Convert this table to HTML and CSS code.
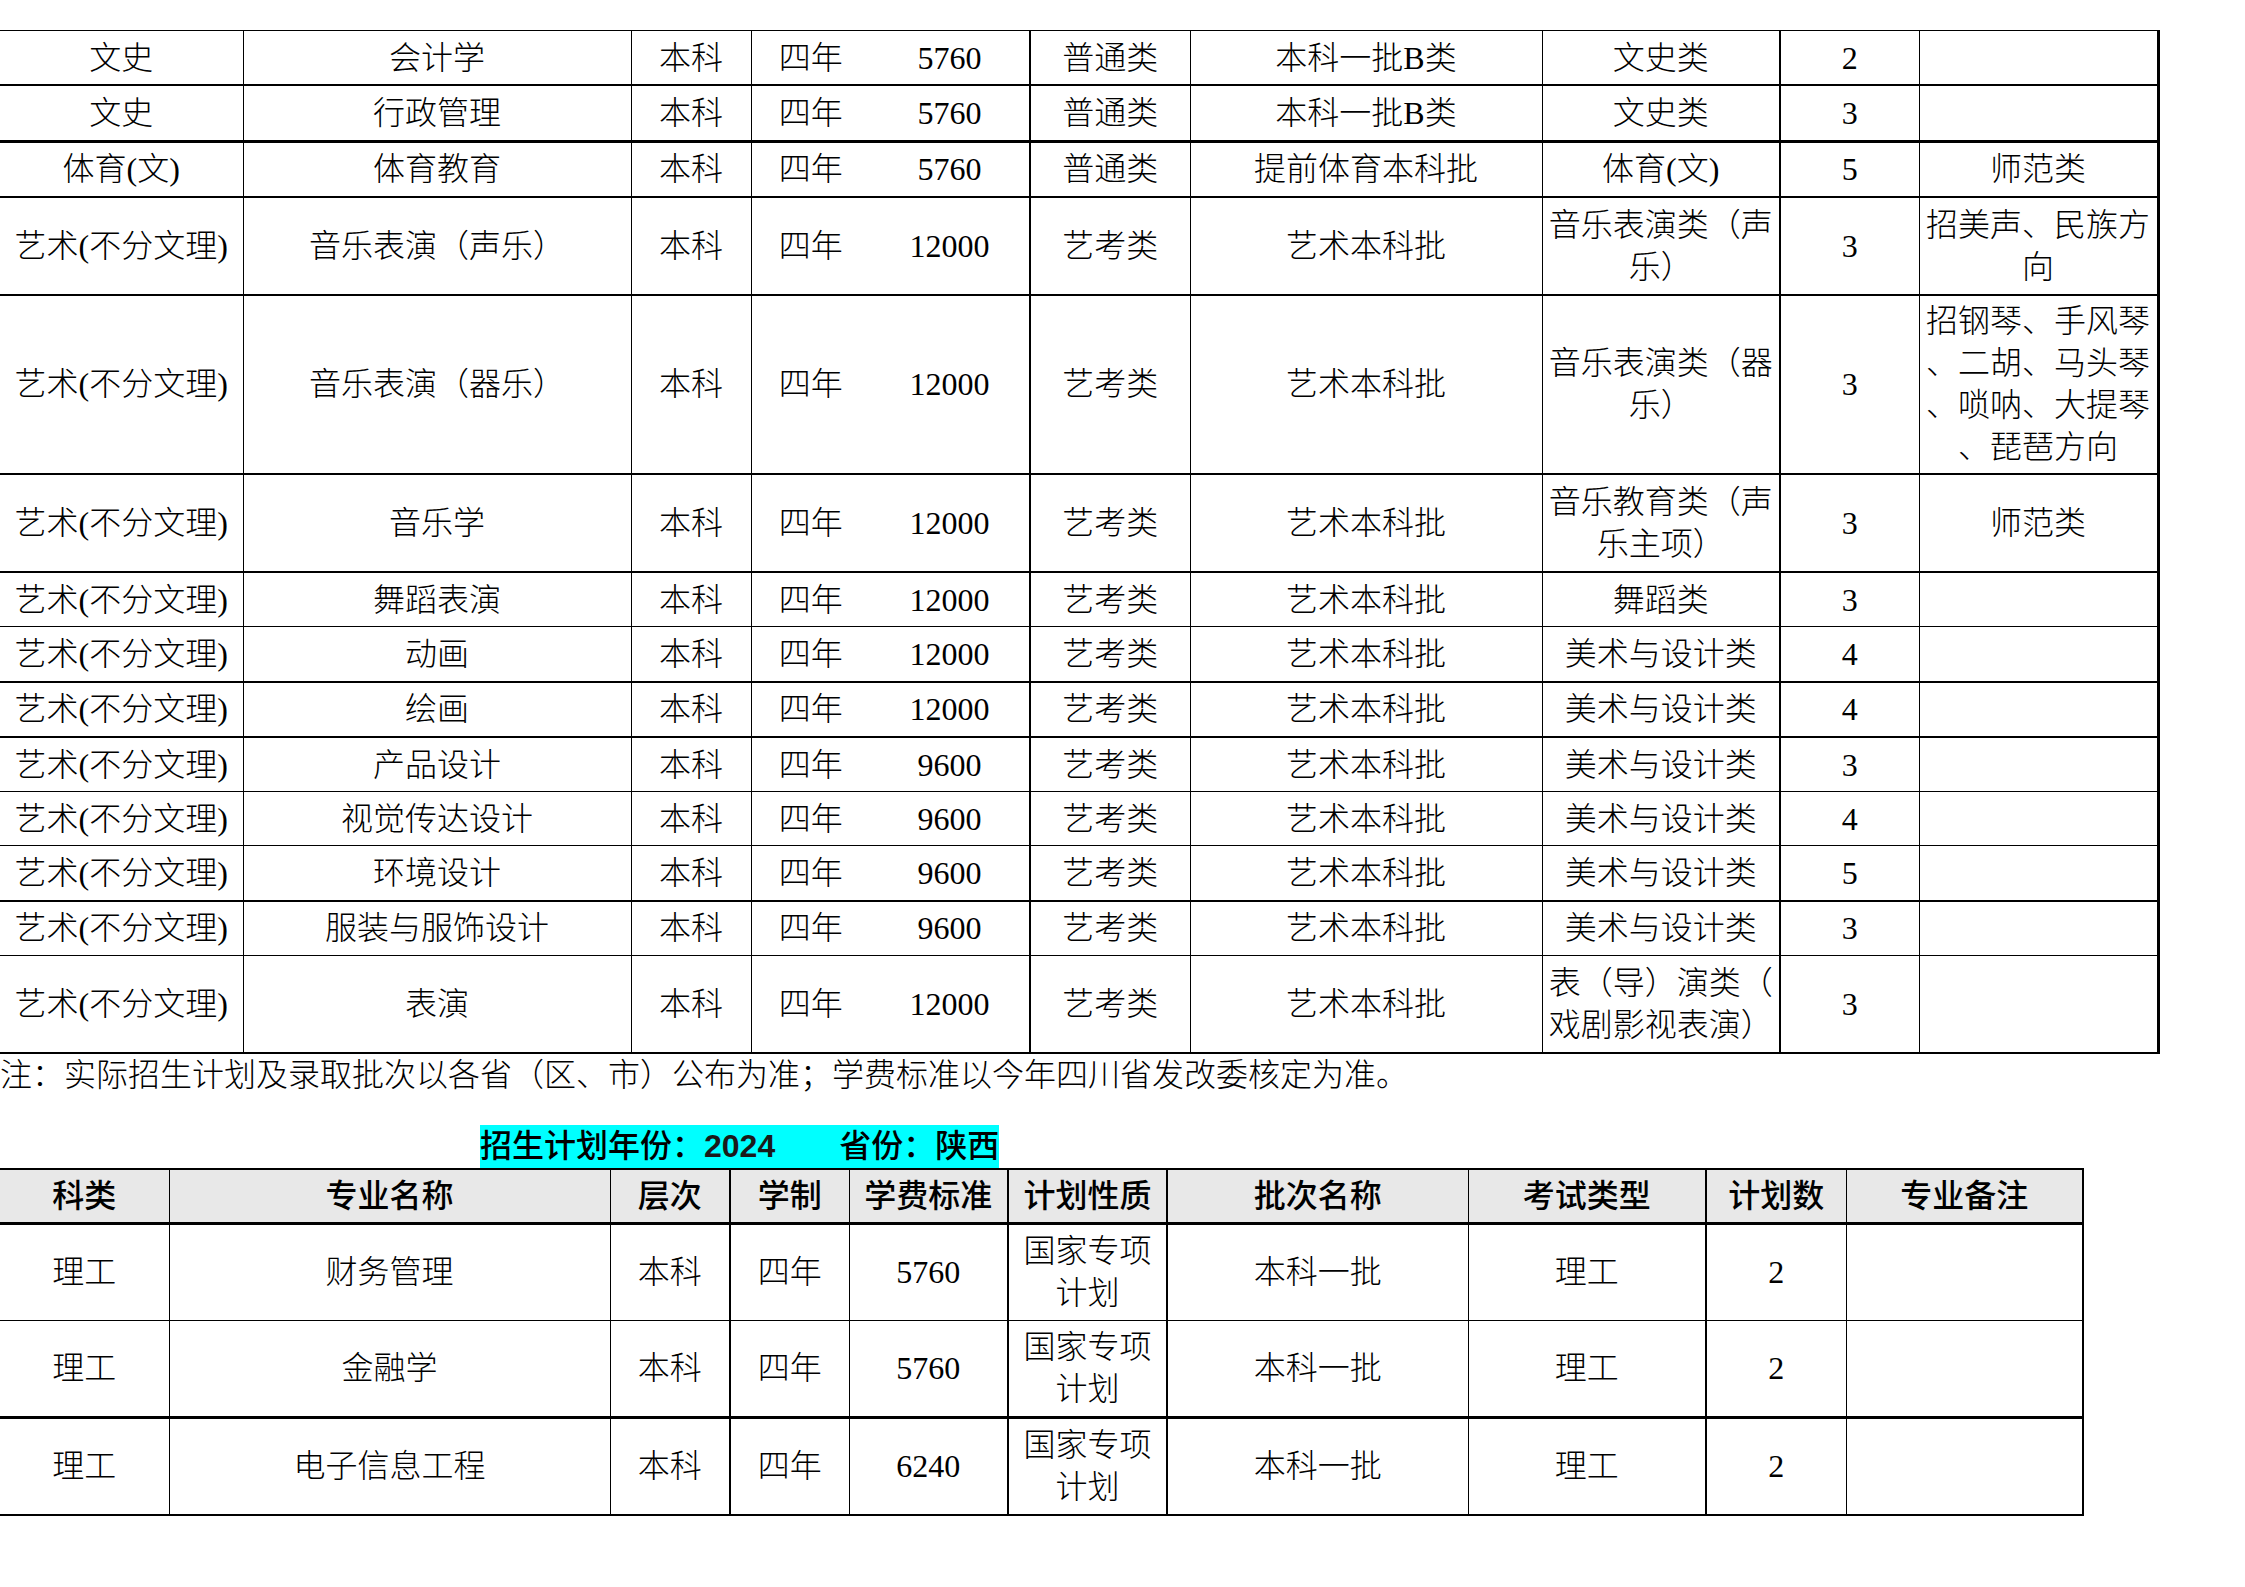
FILE: index.html
```html
<!DOCTYPE html>
<html lang="zh-CN">
<head>
<meta charset="utf-8">
<title>招生计划</title>
<link rel="stylesheet" href="styles.css">
</head>
<body>
<div class="page">
  <table class="plan plan-a">
    <colgroup>
      <col class="a1"><col class="a2"><col class="a3"><col class="a4"><col class="a5">
      <col class="a6"><col class="a7"><col class="a8"><col class="a9"><col class="a10">
    </colgroup>
    <tbody>
      <tr class="h1 b2"><td>文史</td><td>会计学</td><td>本科</td><td>四年</td><td>5760</td><td>普通类</td><td>本科一批B类</td><td>文史类</td><td>2</td><td></td></tr>
      <tr class="h1 b3"><td>文史</td><td>行政管理</td><td>本科</td><td>四年</td><td>5760</td><td>普通类</td><td>本科一批B类</td><td>文史类</td><td>3</td><td></td></tr>
      <tr class="h1 b2"><td>体育(文)</td><td>体育教育</td><td>本科</td><td>四年</td><td>5760</td><td>普通类</td><td>提前体育本科批</td><td>体育(文)</td><td>5</td><td>师范类</td></tr>
      <tr class="h2 b2"><td>艺术(不分文理)</td><td>音乐表演（声乐）</td><td>本科</td><td>四年</td><td>12000</td><td>艺考类</td><td>艺术本科批</td><td class="nw">音乐表演类（声<br>乐）</td><td>3</td><td class="nw">招美声、民族方<br>向</td></tr>
      <tr class="h4 b2"><td>艺术(不分文理)</td><td>音乐表演（器乐）</td><td>本科</td><td>四年</td><td>12000</td><td>艺考类</td><td>艺术本科批</td><td class="nw">音乐表演类（器<br>乐）</td><td>3</td><td class="nw">招钢琴、手风琴<br>、二胡、马头琴<br>、唢呐、大提琴<br>、琵琶方向</td></tr>
      <tr class="h2 b2"><td>艺术(不分文理)</td><td>音乐学</td><td>本科</td><td>四年</td><td>12000</td><td>艺考类</td><td>艺术本科批</td><td class="nw">音乐教育类（声<br>乐主项）</td><td>3</td><td>师范类</td></tr>
      <tr class="h1 b1"><td>艺术(不分文理)</td><td>舞蹈表演</td><td>本科</td><td>四年</td><td>12000</td><td>艺考类</td><td>艺术本科批</td><td>舞蹈类</td><td>3</td><td></td></tr>
      <tr class="h1 b2"><td>艺术(不分文理)</td><td>动画</td><td>本科</td><td>四年</td><td>12000</td><td>艺考类</td><td>艺术本科批</td><td>美术与设计类</td><td>4</td><td></td></tr>
      <tr class="h1 b2"><td>艺术(不分文理)</td><td>绘画</td><td>本科</td><td>四年</td><td>12000</td><td>艺考类</td><td>艺术本科批</td><td>美术与设计类</td><td>4</td><td></td></tr>
      <tr class="h1 b1"><td>艺术(不分文理)</td><td>产品设计</td><td>本科</td><td>四年</td><td>9600</td><td>艺考类</td><td>艺术本科批</td><td>美术与设计类</td><td>3</td><td></td></tr>
      <tr class="h1 b1"><td>艺术(不分文理)</td><td>视觉传达设计</td><td>本科</td><td>四年</td><td>9600</td><td>艺考类</td><td>艺术本科批</td><td>美术与设计类</td><td>4</td><td></td></tr>
      <tr class="h1 b2"><td>艺术(不分文理)</td><td>环境设计</td><td>本科</td><td>四年</td><td>9600</td><td>艺考类</td><td>艺术本科批</td><td>美术与设计类</td><td>5</td><td></td></tr>
      <tr class="h1 b1"><td>艺术(不分文理)</td><td>服装与服饰设计</td><td>本科</td><td>四年</td><td>9600</td><td>艺考类</td><td>艺术本科批</td><td>美术与设计类</td><td>3</td><td></td></tr>
      <tr class="h2 b2"><td>艺术(不分文理)</td><td>表演</td><td>本科</td><td>四年</td><td>12000</td><td>艺考类</td><td>艺术本科批</td><td class="nw">表（导）演类（<br>戏剧影视表演）</td><td>3</td><td></td></tr>
    </tbody>
  </table>

  <p class="note">注：实际招生计划及录取批次以各省（区、市）公布为准；学费标准以今年四川省发改委核定为准。</p>

  <div class="caption"><span class="caption-mark">招生计划年份：<b class="year">2024</b>　　省份：陕西</span></div>

  <table class="plan plan-b">
    <colgroup>
      <col class="b-1"><col class="b-2"><col class="b-3"><col class="b-4"><col class="b-5">
      <col class="b-6"><col class="b-7"><col class="b-8"><col class="b-9"><col class="b-10">
    </colgroup>
    <thead>
      <tr class="head"><th>科类</th><th>专业名称</th><th>层次</th><th>学制</th><th>学费标准</th><th>计划性质</th><th>批次名称</th><th>考试类型</th><th>计划数</th><th>专业备注</th></tr>
    </thead>
    <tbody>
      <tr class="hb b1"><td>理工</td><td>财务管理</td><td>本科</td><td>四年</td><td>5760</td><td class="nw">国家专项<br>计划</td><td>本科一批</td><td>理工</td><td>2</td><td></td></tr>
      <tr class="hb b3"><td>理工</td><td>金融学</td><td>本科</td><td>四年</td><td>5760</td><td class="nw">国家专项<br>计划</td><td>本科一批</td><td>理工</td><td>2</td><td></td></tr>
      <tr class="hb b2"><td>理工</td><td>电子信息工程</td><td>本科</td><td>四年</td><td>6240</td><td class="nw">国家专项<br>计划</td><td>本科一批</td><td>理工</td><td>2</td><td></td></tr>
    </tbody>
  </table>
</div>
</body>
</html>
```

FILE: styles.css
```css
html, body {
  margin: 0;
  padding: 0;
  background: #ffffff;
}

body {
  font-family: "Liberation Serif", "Noto Sans CJK SC", serif;
  font-size: 32px;
  font-weight: 300;
  color: #000000;
}

.page {
  padding-top: 30px;
}

.plan {
  border-collapse: collapse;
  table-layout: fixed;
  border-left: hidden;
}

.plan td,
.plan th {
  border: 1px solid #000;
  padding: 0;
  text-align: center;
  vertical-align: middle;
  line-height: 42px;
  overflow: visible;
}

.plan th {
  font-weight: 500;
  background: #e8e8e8;
}

.nw {
  white-space: nowrap;
}

/* ---- table A column widths ---- */
.plan-a { width: 2159px; border-top: 1px solid #000; border-right: 3px solid #000; }
.a1 { width: 243px; }
.a2 { width: 388px; }
.a3 { width: 120px; }
.a4 { width: 119px; border-right: hidden; }
.a5 { width: 160px; border-right: 2px solid #000; }
.a6 { width: 160px; }
.a7 { width: 352px; }
.a8 { width: 238px; border-right: 2px solid #000; }
.a9 { width: 139px; }
.a10 { width: 239px; }

.h1 td { height: 53.3px; }
.h2 td { height: 95.8px; }
.h4 td { height: 177.5px; }

.b1 td { border-bottom: 1px solid #000; }
.b2 td { border-bottom: 2px solid #000; }
.b3 td { border-bottom: 3px solid #000; }

/* ---- note & caption ---- */
.note {
  margin: 0;
  line-height: 42px;
  white-space: nowrap;
}

.caption {
  margin-top: 29px;
  padding-left: 480px;
  height: 43px;
}

.caption-mark {
  display: inline-block;
  height: 43px;
  line-height: 43px;
  background: #00ffff;
  white-space: nowrap;
  font-weight: 500;
}

.year {
  font-family: "Liberation Sans", sans-serif;
  font-weight: 700;
  color: #1a1a1a;
}

/* ---- table B ---- */
.plan-b { width: 2084px; border-top: 2px solid #000; border-right: 2px solid #000; }
.b-1 { width: 169px; }
.b-2 { width: 441px; }
.b-3 { width: 120px; border-right: 2px solid #000; }
.b-4 { width: 119px; }
.b-5 { width: 159px; border-right: 2px solid #000; }
.b-6 { width: 159px; border-right: 2px solid #000; }
.b-7 { width: 301px; }
.b-8 { width: 238px; border-right: 2px solid #000; }
.b-9 { width: 140px; }
.b-10 { width: 237px; }

.head th { height: 52px; border-bottom: 3px solid #000; }
.hb td { height: 95px; }
```
